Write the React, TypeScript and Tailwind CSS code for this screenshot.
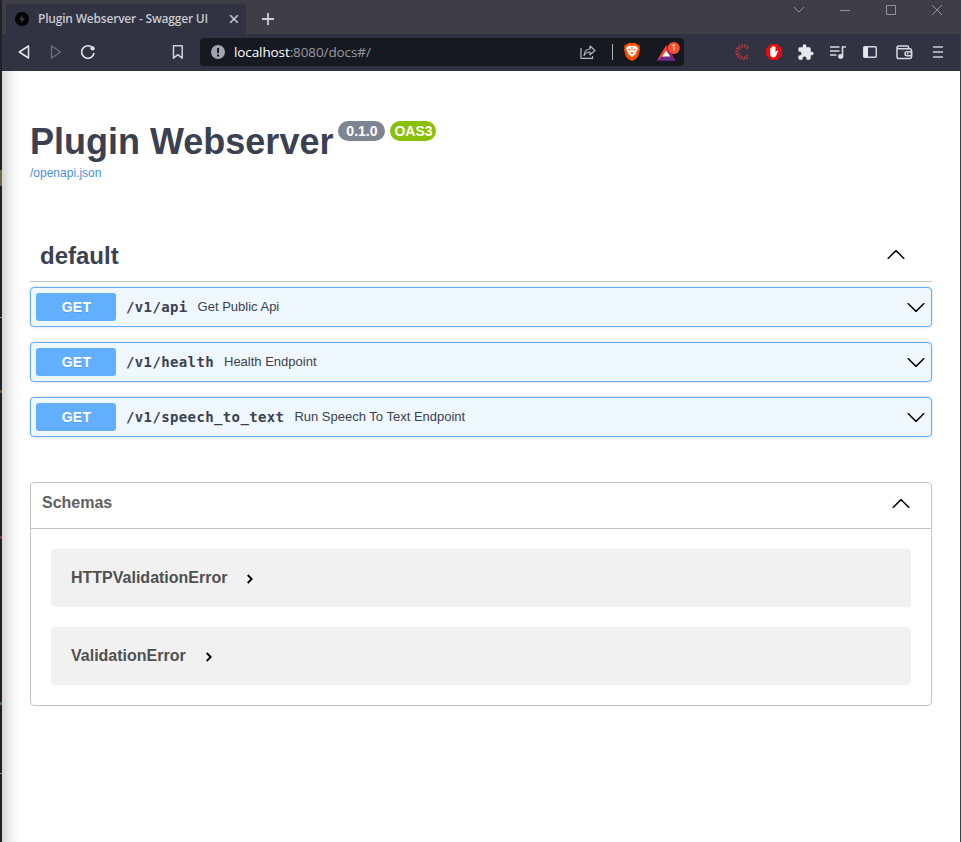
import React from "react";

type ChevronProps = { className?: string; up?: boolean };

function Chevron({ className = "", up = false }: ChevronProps) {
  return (
    <svg className={className} width="20" height="20" viewBox="0 0 20 20">
      <path
        d="M17.418 6.109c.272-.268.709-.268.979 0s.271.701 0 .969l-7.908 7.83c-.27.268-.707.268-.979 0l-7.908-7.83c-.27-.268-.27-.701 0-.969.271-.268.709-.268.979 0L10 13.25z"
        transform={up ? "rotate(180 10 10)" : undefined}
      />
    </svg>
  );
}

function Tab() {
  return (
    <div className="flex h-[30px] w-[240px] items-center rounded-t-[4px] bg-[#313342] pl-[9px]">
      <svg width="14" height="14" viewBox="0 0 14 14">
        <circle cx="7" cy="7" r="7" fill="#000" />
        <path d="M7.8 2.5 4 7.8h2.6L6 11.5l4-5.2H7.3z" fill="#3a3c4a" />
      </svg>
      <span className="ml-[9px] w-[172px] whitespace-nowrap font-['Open_Sans','Noto_Sans',sans-serif] text-[12px] font-semibold leading-[16px] tracking-[-0.2px] text-[#c6c8ce]">
        Plugin Webserver - Swagger UI
      </span>
      <svg className="ml-[19px]" width="10" height="10" viewBox="0 0 10 10">
        <path d="m1.200 1.200 7.600 7.600m0-7.600L1.200 8.800" stroke="#c8cad0" strokeWidth="1.600" />
      </svg>
    </div>
  );
}

function TitleBar() {
  return (
    <div className="flex h-[34px] shrink-0 bg-[#3f3e46] pl-1 pt-1">
      <Tab />
      <svg className="ml-4 mt-[9px]" width="12" height="12" viewBox="0 0 12 12">
        <path d="M6 0v12M0 6h12" stroke="#d0d0d4" strokeWidth="1.800" />
      </svg>
      <svg className="ml-auto mr-[17px]" width="150" height="14" viewBox="0 0 150 14" fill="none" stroke="#929197" strokeWidth="1">
        <path d="m1 3 5 5 5-5M47 6.500h10M93.500 1.500h9v9h-9zM139 1l10 10m0-10-10 10" />
      </svg>
    </div>
  );
}

function BraveLion() {
  return (
    <svg width="16" height="18" viewBox="0 0 16 18">
      <path d="m4.500 0-1.300 1.400-1.700.1L0 4l.6 1.300L0 6.500l2 7.300 2.300 2.200L8 18l3.700-2 2.300-2.200 2-7.300-.6-1.200L16 4l-1.500-2.500-1.700-.1L11.500 0z" fill="#ff5000" />
      <path d="m3.800 3.200 2-.4 2.200.5 2.200-.5 2 .4 1.700 2.100-.8 2.100-1.600 2.300.3 1.400-2.100 1.500L8 14l-1.700-1.400-2.100-1.500.3-1.400-1.600-2.300-.8-2.100z" fill="#fff" />
      <path d="m3.800 5.800 2.700.7-.3 1.300-1.400-.6zm8.400 0-2.700.7.3 1.300 1.400-.6zM7.500 4h1l-.1 3.500h-.8zM6 9.700l2-.7 2 .7-2 1.300z" fill="#ff5000" />
    </svg>
  );
}

function Rewards() {
  return (
    <svg width="24" height="20" viewBox="0 0 24 20">
      <path d="M9.500 3 0 18.500h18.500z" fill="#9e1f63" />
      <path d="M9.500 3 0 18.500l9.500-6z" fill="#ff4724" />
      <path d="m0 18.500 5-4h8.500l5 4z" fill="#662d91" />
      <path d="m9.200 8.500-4 6h8z" fill="#fff" />
      <circle cx="16.800" cy="6" r="6" fill="#ff4d2e" />
      <text x="16.800" y="9.200" textAnchor="middle" className="font-['Open_Sans',sans-serif] text-[9px]" fill="#fff">1</text>
    </svg>
  );
}

function AddressBar() {
  return (
    <div className="ml-4 flex h-7 w-[484px] items-center rounded-[4px] bg-[#171920] pl-[11px] pr-[3px]">
      <svg width="14" height="14" viewBox="0 0 14 14">
        <circle cx="7" cy="7" r="7" fill="#a2a4ad" />
        <path d="M7 3v5M7 9.500v2" stroke="#171920" strokeWidth="2" />
      </svg>
      <span className="ml-[9px] whitespace-nowrap font-['Open_Sans','Noto_Sans',sans-serif] text-[13.500px] leading-5 tracking-[-0.1px] text-[#9799a0]">
        <span className="text-white">localhost</span>:8080/docs#/
      </span>
      <svg className="ml-auto" width="16" height="16" viewBox="0 0 16 16" fill="none" stroke="#b7b8bd" strokeWidth="1.200">
        <path d="M1 4v10.300h11.500V12" />
        <path d="M4 11.500C4.500 7 6.800 5 10 5V2l5 4.500-5 4.300V8C7.500 8 5.500 9 4 11.500z" strokeLinejoin="round" />
      </svg>
      <div className="ml-4 h-4 w-px bg-[#b0b1b6]" />
      <div className="ml-[11px]"><BraveLion /></div>
      <div className="ml-[17px]"><Rewards /></div>
    </div>
  );
}

function Extensions() {
  return (
    <div className="ml-auto mr-[17px] flex items-center text-[#e3e4e8]">
      <svg width="16" height="16" viewBox="0 0 16 16" fill="none" stroke="#d03c40">
        <path d="M13.300 3.200A7 7 0 1 0 13.300 12.800" strokeWidth="1.700" strokeDasharray="1.500 1.500" />
        <path d="M12.300 5A5 5 0 1 0 12.300 11" strokeWidth="1.700" strokeDasharray="1.100 1.200" />
      </svg>
      <svg className="ml-[15px]" width="16" height="16" viewBox="0 0 16 16">
        <path d="M4.700 0h6.600L16 4.700v6.600L11.300 16H4.700L0 11.300V4.700z" fill="#e40d0d" />
        <path d="M4.300 8V4.500c0-.8 1.200-.8 1.200 0V3.200c0-.9 1.300-.9 1.300 0v-.7c0-1 1.400-1 1.400 0v.7c0-.9 1.300-.9 1.300 0v5c.7-.8 1.400-2 2.200-1.700.6.300.4.800.1 1.300l-1.600 3.800c-.8 2.300-4.400 2.500-5.400.4-.5-1-.5-2-.5-4z" fill="#fff" />
      </svg>
      <svg className="ml-4" width="16" height="16" viewBox="1.500 .5 22 22" fill="#e8e9ed">
        <path d="M20.500 11H19V7c0-1.100-.9-2-2-2h-4V3.500C13 2.120 11.880 1 10.500 1S8 2.120 8 3.500V5H4c-1.100 0-1.990.9-1.990 2v3.800H3.500c1.490 0 2.700 1.210 2.700 2.700s-1.210 2.700-2.700 2.700H2V20c0 1.100.9 2 2 2h3.800v-1.500c0-1.490 1.210-2.700 2.700-2.700 1.490 0 2.700 1.210 2.700 2.700V22H17c1.100 0 2-.9 2-2v-4h1.500c1.380 0 2.500-1.120 2.500-2.500S21.880 11 20.500 11z" />
      </svg>
      <svg className="ml-4" width="17" height="16" viewBox="0 0 17 16" fill="none" stroke="#d7d9de" strokeWidth="1.600">
        <path d="M0 3h9.500M0 7h9.500M0 11h6.500M12.500 12.500V3H16" />
        <ellipse cx="10.700" cy="12.500" rx="1.800" ry="1.600" fill="#d7d9de" />
      </svg>
      <svg className="ml-4" width="14" height="12" viewBox="0 0 14 12">
        <rect x=".7" y=".7" width="12.600" height="10.600" rx="1" fill="none" stroke="#d7d9de" strokeWidth="1.400" />
        <path d="M1 1h4v10H1z" fill="#e6e7eb" />
      </svg>
      <svg className="ml-[19px]" width="17" height="15" viewBox="0 0 17 15" fill="none" stroke="#d7d9de" strokeWidth="1.500">
        <path d="M12.500 3.500V2.300a1.300 1.300 0 0 0-1.300-1.300H2.500C1.500 1 1 1.700 1 2.500v9.300C1 13 1.700 13.600 2.700 13.600h11c1 0 1.800-.7 1.800-1.600V5.500c0-1-.7-1.800-1.800-1.800H3c-1.200 0-2-.5-2-1.500" />
        <path d="M15.500 6.700H11a2 2 0 0 0 0 4h4.500z" />
        <path d="M11 8.700h1.500" />
      </svg>
      <svg className="ml-5" width="10" height="12" viewBox="0 0 10 12">
        <path d="M0 1h10M0 6h10M0 11h10" stroke="#c9cbd0" strokeWidth="1.700" />
      </svg>
    </div>
  );
}

function Toolbar() {
  return (
    <div className="flex h-[37px] shrink-0 items-center bg-[#313342] pb-px pl-4">
      <svg width="12" height="14" viewBox="0 0 12 14" fill="none" stroke="#e3e4e8" strokeWidth="1.500" strokeLinejoin="round">
        <path d="M10.500 1v12L1.300 7z" />
      </svg>
      <svg className="ml-5" width="12" height="14" viewBox="0 0 12 14" fill="none" stroke="#707280" strokeWidth="1.300" strokeLinejoin="round">
        <path d="M1.500 1v12l9.200-6z" />
      </svg>
      <svg className="ml-[19px]" width="14" height="14" viewBox="0 0 14 14" fill="none" stroke="#e3e4e8" strokeWidth="1.600">
        <path d="M10.500 2A6.200 6.200 0 1 0 13 8" />
        <circle cx="11.600" cy="3.400" r="2.100" fill="#e3e4e8" stroke="none" />
      </svg>
      <svg className="ml-[77px]" width="12" height="14" viewBox="0 0 12 14" fill="none" stroke="#d0d2d7" strokeWidth="1.500">
        <path d="M1.500.8h8.700v12.400L5.900 9.700l-4.400 3.500z" strokeLinejoin="round" />
      </svg>
      <AddressBar />
      <Extensions />
    </div>
  );
}

function ApiHeading() {
  return (
    <header className="h-[109px]">
      <div className="flex h-[43px] items-start">
        <h1 className="whitespace-nowrap text-[36px] font-bold leading-[43px] text-[#3b4151]">Plugin Webserver</h1>
        <span className="ml-[5px] mt-px flex h-5 w-[47px] items-center justify-center rounded-full bg-[#7d8492] text-[14px] font-bold text-white">0.1.0</span>
        <span className="ml-[5px] mt-px flex h-5 w-[46px] items-center justify-center rounded-full bg-[#89bf04] text-[14px] font-bold text-white">OAS3</span>
      </div>
      <a className="mt-[3px] block text-[12px] leading-[14px] text-[#4990e2]">/openapi.json</a>
    </header>
  );
}

const operations = [
  { path: "/v1/api", summary: "Get Public Api" },
  { path: "/v1/health", summary: "Health Endpoint" },
  { path: "/v1/speech_to_text", summary: "Run Speech To Text Endpoint" },
];

function Operation({ path, summary }: { path: string; summary: string }) {
  return (
    <div className="flex h-10 items-center rounded border border-[#61affe] bg-[#eff7ff] pl-[5px] pr-[5px] shadow-[0_0_3px_rgba(0,0,0,0.19)]">
      <span className="flex h-7 w-20 items-center justify-center rounded-[3px] bg-[#61affe] pl-px text-[14px] font-bold tracking-[0.3px] text-white [text-shadow:0_1px_0_rgba(0,0,0,0.1)]">GET</span>
      <span className="ml-[10px] whitespace-nowrap font-['DejaVu_Sans_Mono',monospace] text-[14px] font-bold leading-5 tracking-[0.37px] text-[#3b4151]">{path}</span>
      <span className="ml-[10px] whitespace-nowrap text-[13px] leading-5 text-[#3b4151]">{summary}</span>
      <Chevron className="ml-auto" />
    </div>
  );
}

function Schema({ name }: { name: string }) {
  return (
    <div className="flex h-[58px] items-center rounded bg-[#f1f1f1] pl-5">
      <span className="text-[16px] font-bold leading-5 text-[#505050]">{name}</span>
      <svg className="ml-[19px] mt-px" width="8" height="12" viewBox="0 0 8 12">
        <path d="m1.700 2 4 4-4 4" fill="none" stroke="#000" strokeWidth="1.800" />
      </svg>
    </div>
  );
}

export default function App() {
  return (
    <div className="flex h-[842px] w-[961px] overflow-hidden bg-white font-['Liberation_Sans',Arial,sans-serif]">
      <div className="w-0.5 shrink-0 bg-[#222126] bg-[linear-gradient(transparent_170px,#746849_170px,#746849_186px,transparent_186px,transparent_317px,#88898d_317px,#88898d_318px,transparent_318px,transparent_390px,#805034_390px,#805034_393px,transparent_393px,transparent_536px,#694035_536px,#694035_539px,transparent_539px,transparent_702px,#466b83_702px,#466b83_705px,transparent_705px,transparent_773px,#88898d_773px,#88898d_774px,transparent_774px)]" />
      <div className="flex min-w-0 flex-1 flex-col">
        <TitleBar />
        <Toolbar />
        <main className="flex-1 bg-[linear-gradient(to_right,#d4d4d4_0px,#e5e5e5_5px,#f7f7f7_12px,#fff_20px)] pl-7 pr-7 pt-[49px]">
          <ApiHeading />
          <section>
            <div className="flex h-[53px] items-center justify-between border-b border-[#c4c6cb] pl-[10px] pr-[26px]">
              <h2 className="mt-0.5 text-[24px] font-bold leading-7 text-[#3b4151]">default</h2>
              <Chevron up />
            </div>
            <div className="mt-[5px] flex flex-col gap-[15px]">
              {operations.map((operation) => (
                <Operation key={operation.path} {...operation} />
              ))}
            </div>
          </section>
          <section className="mt-[45px] h-[224px] rounded border border-[#c4c4c4]">
            <div className="flex h-[46px] items-center justify-between border-b border-[#c4c4c4] pl-[11px] pr-5">
              <h3 className="mb-[5px] text-[16px] font-bold leading-5 text-[#606060]">Schemas</h3>
              <Chevron up className="mb-[3px]" />
            </div>
            <div className="flex flex-col gap-5 p-5">
              <Schema name="HTTPValidationError" />
              <Schema name="ValidationError" />
            </div>
          </section>
        </main>
      </div>
      <div className="w-px shrink-0 bg-[#3d3d42]" />
    </div>
  );
}
